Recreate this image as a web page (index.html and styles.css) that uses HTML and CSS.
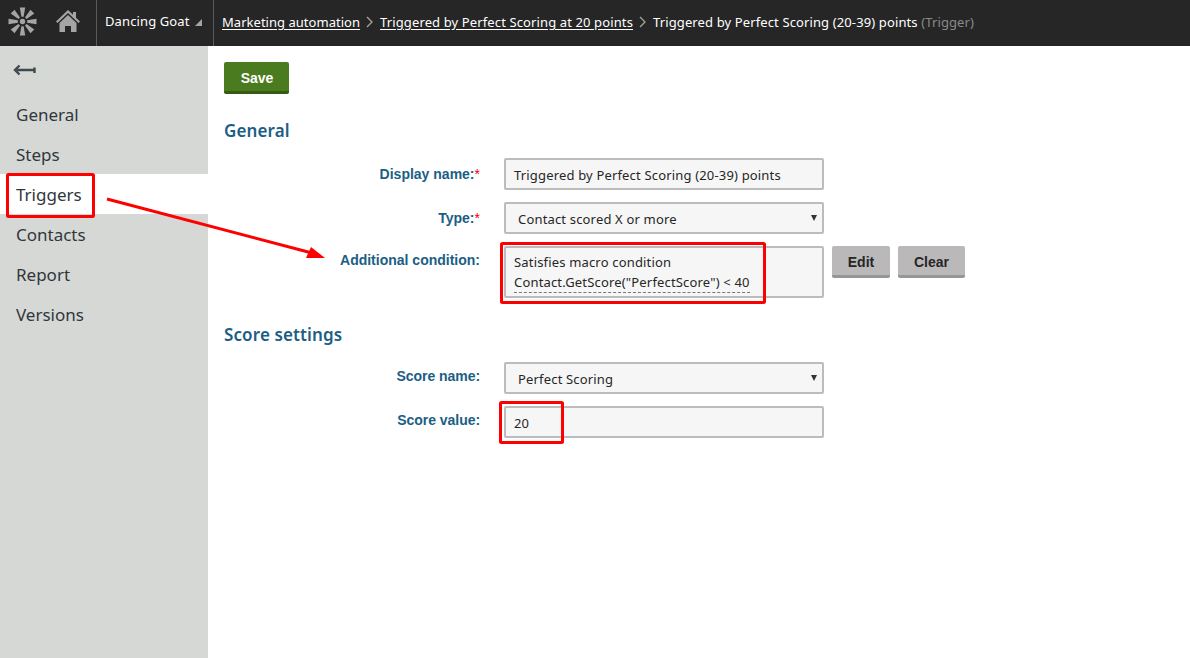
FILE: index.html
```html
<!DOCTYPE html>
<html lang="en">
<head>
<meta charset="utf-8">
<title>Trigger</title>
<link rel="stylesheet" href="styles.css">
</head>
<body>
<header class="topbar">
  <div class="logo">
    <svg width="29" height="29" viewBox="0 0 28 28"><g fill="#a5a5a5"><circle cx="14" cy="14" r="2.600"/><path d="M11.400 .5h5.200l-1.500 9h-2.200z"/><path d="M11.400 .5h5.200l-1.500 9h-2.200z" transform="rotate(45 14 14)"/><path d="M11.400 .5h5.200l-1.500 9h-2.200z" transform="rotate(90 14 14)"/><path d="M11.400 .5h5.200l-1.500 9h-2.200z" transform="rotate(135 14 14)"/><path d="M11.400 .5h5.200l-1.500 9h-2.200z" transform="rotate(180 14 14)"/><path d="M11.400 .5h5.200l-1.500 9h-2.200z" transform="rotate(225 14 14)"/><path d="M11.400 .5h5.200l-1.500 9h-2.200z" transform="rotate(270 14 14)"/><path d="M11.400 .5h5.200l-1.500 9h-2.200z" transform="rotate(315 14 14)"/></g></svg>
  </div>
  <div class="home">
    <svg width="26" height="24" viewBox="0 0 26 24"><path fill="#a5a5a5" d="M13 1 1 12.500l1.500 1.500L13 4l10.500 10 1.500-1.500-4-3.800V3h-3v2.800z"/><path fill="#a5a5a5" d="M13 6 4.500 14v9H10v-6h6v6h5.500v-9z"/></svg>
  </div>
  <div class="site">Dancing Goat <span class="site-caret"></span></div>
  <nav class="crumbs">
    <a class="crumb-link crumb-first" href="#">Marketing automation</a>
    <svg class="chev" width="8" height="12" viewBox="0 0 8 12"><path d="M1 1l5 5-5 5" fill="none" stroke="#a5a5a5" stroke-width="1.300"/></svg>
    <a class="crumb-link" href="#">Triggered by Perfect Scoring at 20 points</a>
    <svg class="chev" width="8" height="12" viewBox="0 0 8 12"><path d="M1 1l5 5-5 5" fill="none" stroke="#a5a5a5" stroke-width="1.300"/></svg>
    <span>Triggered by Perfect Scoring (20-39) points <span class="crumb-type">(Trigger)</span></span>
  </nav>
</header>
<div class="main">
  <aside class="sidebar">
    <div class="back">
      <svg width="24" height="12" viewBox="0 0 24 12"><path d="M4 6h17M21.500 3.500v5.500M6.500 1.500 2 6l4.500 4.500" fill="none" stroke="#3f4a50" stroke-width="2.400"/></svg>
    </div>
    <ul class="menu">
      <li class="menu-item">General</li>
      <li class="menu-item">Steps</li>
      <li class="menu-item is-active">Triggers</li>
      <li class="menu-item">Contacts</li>
      <li class="menu-item">Report</li>
      <li class="menu-item">Versions</li>
    </ul>
  </aside>
  <main class="content">
    <button class="btn-save">Save</button>
    <h2 class="section first">General</h2>
    <div class="form">
      <div class="row">
        <label class="label">Display name:<span class="req">*</span></label>
        <div class="field">Triggered by Perfect Scoring (20-39) points</div>
      </div>
      <div class="row">
        <label class="label">Type:<span class="req">*</span></label>
        <div class="field select">Contact scored X or more<span class="arrow"></span></div>
      </div>
      <div class="row row-top">
        <label class="label">Additional condition:</label>
        <div class="field area">
          <div>Satisfies macro condition</div>
          <div><span class="macro">Contact.GetScore("PerfectScore") &lt; 40</span></div>
        </div>
        <button class="btn-grey">Edit</button>
        <button class="btn-grey">Clear</button>
      </div>
    </div>
    <h2 class="section second">Score settings</h2>
    <div class="form">
      <div class="row">
        <label class="label label-high">Score name:</label>
        <div class="field select">Perfect Scoring<span class="arrow"></span></div>
      </div>
      <div class="row">
        <label class="label label-high">Score value:</label>
        <div class="field">20</div>
      </div>
    </div>
  </main>
</div>
<svg class="annotations" width="1190" height="658" viewBox="0 0 1190 658">
  <g fill="none" stroke="#f00" stroke-width="3">
    <rect x="7.500" y="174.500" width="86" height="42" rx="1"/>
    <rect x="501.500" y="243.500" width="263" height="59" rx="1"/>
    <rect x="500.500" y="402.500" width="62" height="40" rx="1"/>
  </g>
  <path d="M107 199 312 253" stroke="#f00" stroke-width="3" fill="none"/>
  <path d="M325 258 306 258 311 247z" fill="#f00"/>
</svg>
</body>
</html>
```
FILE: styles.css
```css
* { box-sizing: border-box; }
html, body { margin: 0; height: 100%; }
body {
  width: 1190px;
  height: 658px;
  overflow: hidden;
  position: relative;
  background: #fff;
  font-family: "Noto Sans", "Open Sans", sans-serif;
  font-size: 13px;
  color: #262626;
}
.topbar {
  height: 46px;
  background: #262626;
  color: #fff;
  display: flex;
  align-items: center;
  letter-spacing: .12px;
}
.logo { width: 45px; height: 46px; display: flex; align-items: center; justify-content: center; padding-bottom: 3px; }
.home { width: 51px; height: 46px; display: flex; align-items: center; justify-content: center; padding: 0 6px 4px 0; }
.site {
  width: 118px;
  height: 46px;
  border-left: 1px solid #5a5a5a;
  border-right: 1px solid #5a5a5a;
  padding-left: 8px;
  line-height: 43px;
  white-space: nowrap;
}
.site-caret {
  display: inline-block;
  width: 0; height: 0;
  border-style: solid;
  border-width: 0 0 7px 7px;
  border-color: transparent transparent #a5a5a5 transparent;
  margin-left: 2px;
}
.crumbs { display: flex; align-items: center; padding: 0 0 2px 8px; white-space: nowrap; gap: 6px; height: 46px; }
.crumb-link { color: #fff; text-decoration: underline; text-underline-offset: 2px; }
.crumb-first { letter-spacing: .03px; }
.crumb-type { color: #8a8a8a; }
.chev { flex: none; }
.main { display: flex; height: 612px; }
.sidebar { width: 208px; background: #d6d8d5; flex: none; }
.back { height: 48px; padding: 18px 0 0 13px; }
.back svg { display: block; }
.menu { list-style: none; margin: 0; padding: 0; }
.menu-item {
  height: 40px;
  line-height: 41px;
  padding-left: 16px;
  font-family: "Noto Sans", sans-serif;
  font-size: 17px;
  color: #30373c;
}
.is-active { background: #fff; }
.content { flex: 1; padding: 16px 0 0 16px; }
.btn-save {
  display: block;
  width: 65px;
  height: 32px;
  background: #4a7c1f;
  border: 0;
  border-bottom: 3px solid #365c14;
  border-radius: 2px;
  color: #fff;
  font: bold 14px "Liberation Sans", sans-serif;
  padding: 2px 0 0 1px;
}
.section {
  margin: 0;
  font-family: "Noto Sans", sans-serif;
  font-size: 17px;
  font-weight: 600;
  color: #1b5e85;
  line-height: 24px;
  letter-spacing: .12px;
}
.first { margin-top: 25px; height: 39px; }
.second { margin-top: 25px; height: 39px; }
.form { display: flex; flex-direction: column; gap: 12px; }
.row { display: flex; align-items: center; gap: 8px; min-height: 32px; }
.row-top { align-items: flex-start; }
.label {
  width: 256px;
  margin-right: 16px;
  text-align: right;
  font: bold 14px/30px "Liberation Sans", sans-serif;
  color: #1b5e85;
  white-space: nowrap;
}
.row-top .label { line-height: 28px; }
.label-high { align-self: flex-start; line-height: 28px; letter-spacing: -.05px; }
.req { color: #e00; font-weight: normal; }
.field {
  position: relative;
  width: 320px;
  height: 32px;
  background: #f6f6f6;
  border: 2px solid #bcbcbc;
  border-radius: 2px;
  padding-left: 8px;
  line-height: 31px;
  white-space: nowrap;
  letter-spacing: .17px;
}
.select { padding-left: 12px; }
.arrow {
  position: absolute;
  right: 5px;
  top: 11px;
  width: 0; height: 0;
  border-style: solid;
  border-width: 6px 3px 0 3px;
  border-color: #333 transparent transparent transparent;
}
.area { height: 52px; padding-top: 4px; line-height: 20px; }
.macro { border-bottom: 1px dashed #777; display: inline-block; line-height: 19px; }
.btn-grey {
  height: 32px;
  background: #bab8b8;
  border: 0;
  border-bottom: 3px solid #979595;
  border-radius: 2px;
  color: #262626;
  font: bold 14px "Liberation Sans", sans-serif;
  padding: 2px 0 0;
  width: 58px;
}
.btn-grey + .btn-grey { width: 67px; }
.annotations { position: absolute; left: 0; top: 0; pointer-events: none; }
```
